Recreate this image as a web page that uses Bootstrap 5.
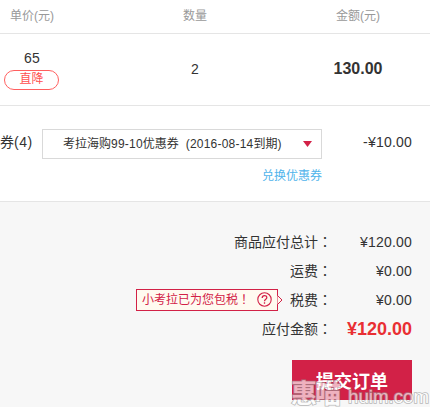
<!DOCTYPE html>
<html lang="zh-CN">
<head>
<meta charset="utf-8">
<meta name="viewport" content="width=device-width, initial-scale=1">
<title>提交订单</title>
<link href="https://cdn.jsdelivr.net/npm/bootstrap@5.3.0/dist/css/bootstrap.min.css" rel="stylesheet">
<style>
body{font:14px/20px "Liberation Sans","Noto Sans CJK SC",sans-serif;color:#333;background:#f7f7f7;height:407px;overflow:hidden}
.order-grid{display:grid;grid-template-columns:64px 262px 64px;text-align:center;align-items:center;border-bottom:1px solid #e5e5e5;background:#fff}
.order-head{height:34px;padding-bottom:2px;font-size:12px;color:#999}
.order-item{height:72px}
.num{letter-spacing:.2px}
.unit-price{height:18px;line-height:18px}
.cut-tag{width:55px;height:20px;border:1px solid #ff5f5f;color:#ff5050;font-size:12px;line-height:17px;margin-top:3px;margin-left:4px}
.item-total{font-size:16px;padding-bottom:2px}
.item-count{padding-bottom:1px}
.coupon-area{height:96px;padding:23px 18px 0 0;background:#fff;border-bottom:1px solid #e5e5e5}
.coupon-label{width:42px;padding-top:3px}
.coupon-label .num{letter-spacing:.5px}
.coupon-col{width:280px}
.coupon-select{height:30px;border:1px solid #d9d9d9;border-radius:0;background:#fff;font-size:12px;line-height:28px;padding:0 9px 0 20px}
.coupon-select .num{letter-spacing:.22px}
.caret{width:9px;height:6px;flex:none;background:#d22147;clip-path:polygon(0 0,100% 0,50% 100%)}
.redeem{font-size:12px;line-height:18px;color:#50b4eb;margin-top:8px}
.summary{padding:25px 18px 0 0}
.sum-row{height:29px}
.sum-value{width:80px;text-align:right;padding-top:1px}
.mid{font-family:"Noto Sans CJK TC",sans-serif}
.pay-total{font-size:18px;color:#e92f33}
.tax-tip{position:relative;width:142px;height:22px;border:1px solid #d22147;background:#fffaf0;color:#d22147;font-size:12px;line-height:20px;padding:0 5px;margin-right:12px}
.tip-arrow{position:absolute;left:139px;top:3px}
.submit-btn{width:120px;height:40px;margin:17px 18px 0 0;border:0;border-radius:0;background:#d22147;color:#fff;font:bold 18px/36px "Noto Sans CJK SC",sans-serif}
.submit-btn:hover{background:#c01c3f;color:#fff}
.watermark{position:absolute;left:290px;top:376px;pointer-events:none}
</style>
</head>
<body>
<main>
  <div class="order-grid order-head"><span>单价(元)</span><span>数量</span><span>金额(元)</span></div>
  <div class="order-grid order-item">
    <div><div class="unit-price num">65</div><div class="cut-tag rounded-pill">直降</div></div>
    <div class="item-count">2</div>
    <div class="item-total fw-bold">130.00</div>
  </div>
  <section class="coupon-area d-flex align-items-start">
    <div class="coupon-label text-nowrap">券<span class="num">(4)</span></div>
    <div class="coupon-col">
      <div class="coupon-select d-flex justify-content-between align-items-center">
        <span class="text-nowrap">考拉海购<span class="num">99-10</span>优惠券&nbsp;<span class="num"> (2016-08-14</span>到期)</span>
        <span class="caret"></span>
      </div>
      <div class="redeem text-end">兑换优惠券</div>
    </div>
    <div class="num ms-auto coupon-label w-auto">-¥10.00</div>
  </section>
  <section class="summary">
    <div class="sum-row d-flex justify-content-end align-items-center"><span>商品应付总计<span class="mid" lang="zh-TW">：</span></span><span class="sum-value num">¥120.00</span></div>
    <div class="sum-row d-flex justify-content-end align-items-center"><span>运费<span class="mid" lang="zh-TW">：</span></span><span class="sum-value num">¥0.00</span></div>
    <div class="sum-row d-flex justify-content-end align-items-center">
      <div class="tax-tip d-flex align-items-center justify-content-between">
        <span class="text-nowrap">小考拉已为您包税<span class="mid" lang="zh-TW">！</span></span>
        <svg width="15" height="15" viewBox="0 0 15 15" fill="none" stroke="#d22147" stroke-width="1.1"><circle cx="7.5" cy="7.5" r="6.7"/><path d="M5.2 5.9C5.2 2.8 9.9 2.9 9.8 5.7C9.7 7.3 7.5 7.3 7.5 9.3M7.5 10.3V11.7" stroke-width="1.3"/></svg>
        <svg class="tip-arrow" width="8" height="14" viewBox="0 0 8 14"><path d="M1.5 2.5L6 7L1.5 11.5" fill="#fffaf0" stroke="#d22147"/></svg>
      </div>
      <span>税费<span class="mid" lang="zh-TW">：</span></span><span class="sum-value num">¥0.00</span>
    </div>
    <div class="sum-row d-flex justify-content-end align-items-center"><span>应付金额<span class="mid" lang="zh-TW">：</span></span><span class="sum-value pay-total fw-bold">¥120.00</span></div>
  </section>
  <div class="d-flex justify-content-end"><button class="btn submit-btn p-0" type="button">提交订单</button></div>
</main>
<svg class="watermark" width="140" height="31" viewBox="0 0 140 31">
  <g fill="#fff" stroke="#999" stroke-width="1.6" paint-order="stroke" opacity=".65">
    <text x="1" y="27" font-size="26" textLength="50" font-weight="bold" font-family="Noto Sans CJK SC">惠喵</text>
    <text x="58" y="27" font-size="18" textLength="81" lengthAdjust="spacingAndGlyphs" font-family="Liberation Sans">huim.com</text>
  </g>
</svg>
<script src="https://cdn.jsdelivr.net/npm/bootstrap@5.3.0/dist/js/bootstrap.bundle.min.js"></script>
</body>
</html>
